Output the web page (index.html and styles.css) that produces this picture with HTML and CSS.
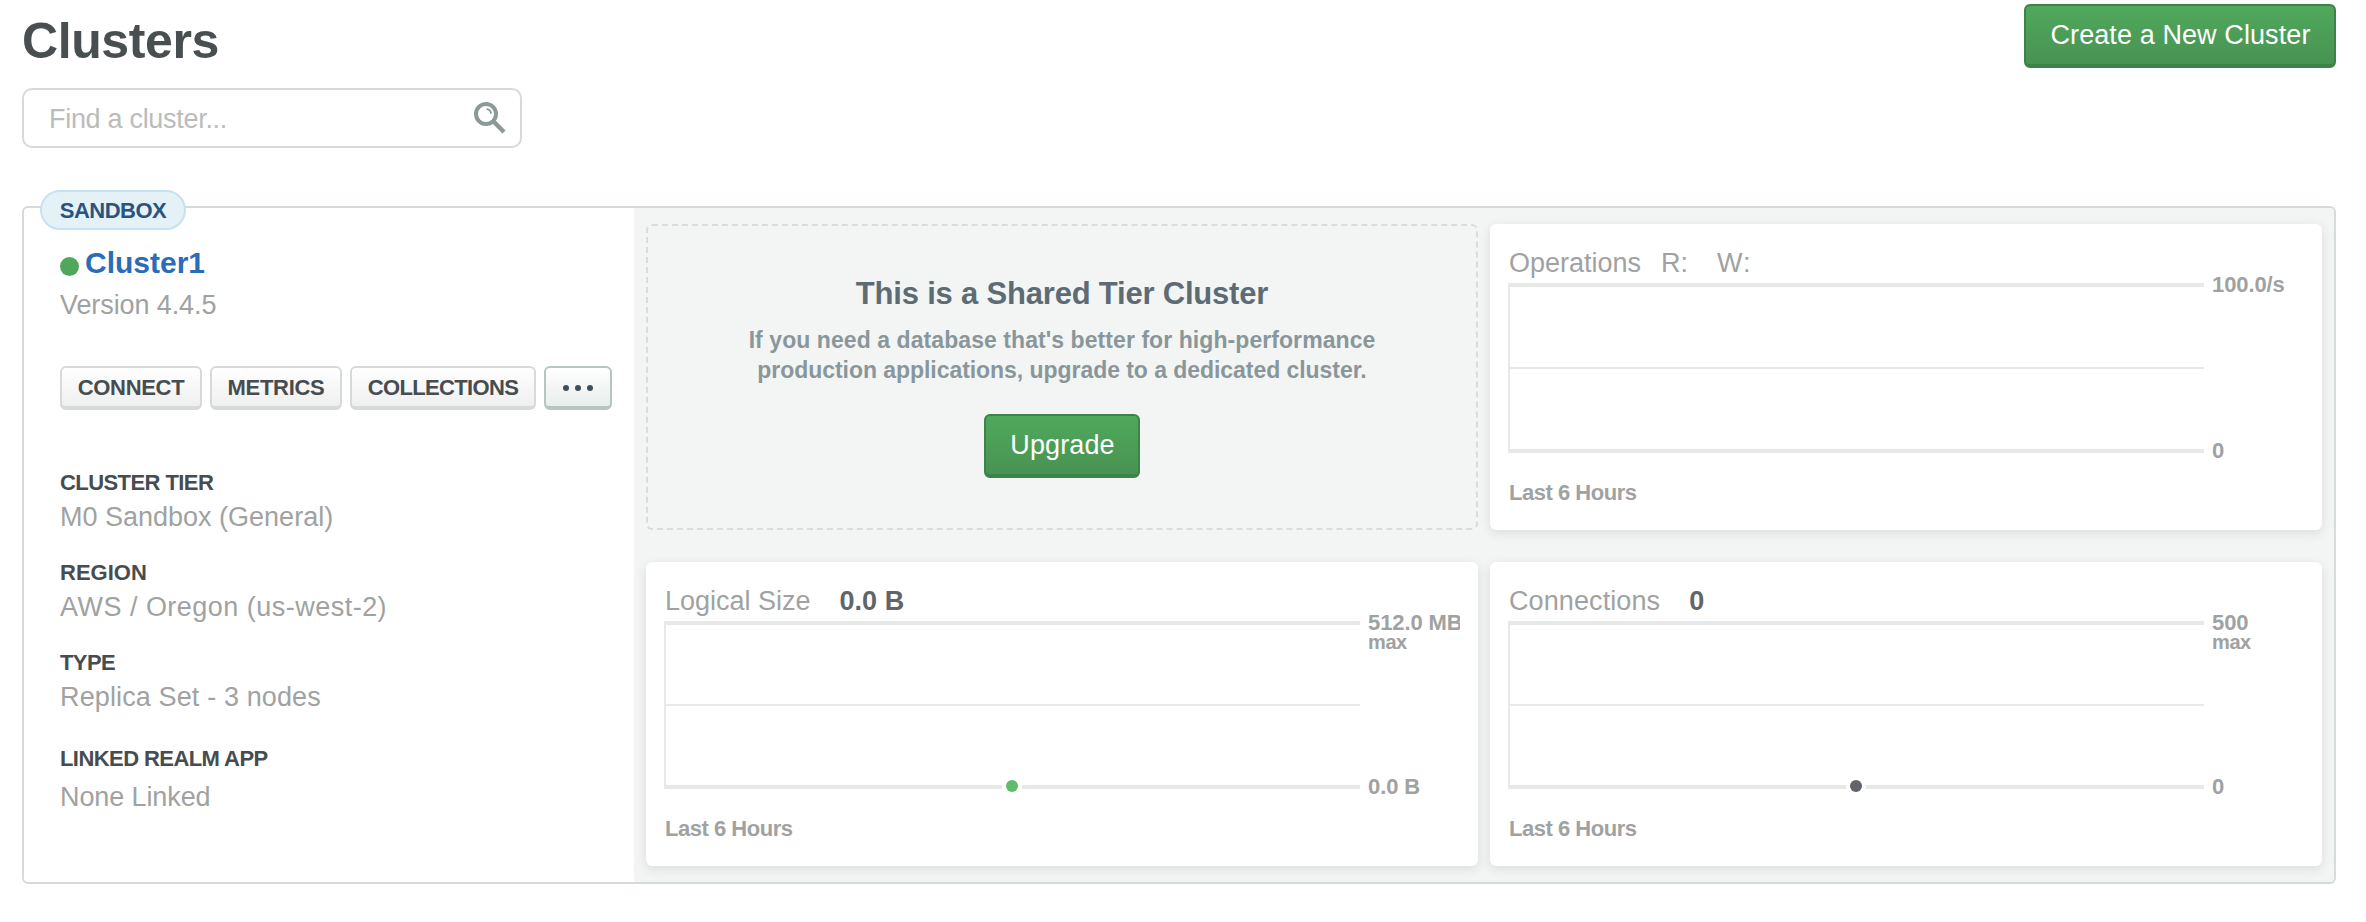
FILE: index.html
```html
<!DOCTYPE html>
<html lang="en">
<head>
<meta charset="utf-8">
<title>Clusters</title>
<link rel="stylesheet" href="styles.css">
</head>
<body>
<header class="page-header">
  <div class="page-heading">
    <h1 class="title">Clusters</h1>
    <label class="search">
      <input class="search-input" type="text" placeholder="Find a cluster...">
      <svg class="search-icon" width="34" height="34" viewBox="0 0 34 34" fill="none" stroke="#8d9899">
        <circle cx="13" cy="13" r="10" stroke-width="4"/>
        <path d="M20.5 20.5 31 31" stroke-width="4.4"/>
        <path d="M13.6 8.2a4.8 4.8 0 0 1 4.4 4.6" stroke-width="1.8"/>
      </svg>
    </label>
  </div>
  <button class="btn-primary btn-create">Create a New Cluster</button>
</header>

<main class="cluster">
  <span class="badge">SANDBOX</span>
  <section class="info">
    <div class="name-row"><span class="status"></span><a class="name">Cluster1</a></div>
    <div class="value version">Version 4.4.5</div>
    <div class="actions">
      <button class="btn btn-connect">CONNECT</button>
      <button class="btn btn-metrics">METRICS</button>
      <button class="btn btn-collections">COLLECTIONS</button>
      <button class="btn btn-more" aria-label="More">
        <svg width="32" height="8" viewBox="0 0 32 8" fill="#3d4f58"><circle cx="4" cy="4" r="3"/><circle cx="16" cy="4" r="3"/><circle cx="28" cy="4" r="3"/></svg>
      </button>
    </div>
    <dl class="facts">
      <dt class="label tight">CLUSTER TIER</dt>
      <dd class="value">M0 Sandbox (General)</dd>
      <dt class="label">REGION</dt>
      <dd class="value region">AWS / Oregon (us-west-2)</dd>
      <dt class="label tight">TYPE</dt>
      <dd class="value type">Replica Set - 3 nodes</dd>
      <dt class="label tight linked">LINKED REALM APP</dt>
      <dd class="value linked-value">None Linked</dd>
    </dl>
  </section>

  <section class="panels">
    <div class="upsell">
      <h2 class="upsell-title">This is a Shared Tier Cluster</h2>
      <p class="upsell-text">If you need a database that's better for high-performance<br><span class="second-line">production applications, upgrade to a dedicated cluster.</span></p>
      <button class="btn-primary btn-upgrade">Upgrade</button>
    </div>

    <article class="card">
      <div class="card-head"><span class="metric operations">Operations</span><span class="read">R:</span><span class="write">W:</span></div>
      <div class="chart">
        <svg class="plot" width="696" height="170" fill="#e7e9e8">
          <rect width="696" height="4"/><rect y="84" width="696" height="2"/><rect y="166" width="696" height="4"/><rect width="2" height="170"/>
        </svg>
        <div class="scale"><div>100.0/s</div><div>0</div></div>
      </div>
      <div class="period">Last 6 Hours</div>
    </article>

    <article class="card">
      <div class="card-head"><span class="metric">Logical Size</span><b class="reading">0.0 B</b></div>
      <div class="chart">
        <svg class="plot" width="696" height="168" fill="#e7e9e8">
          <rect width="696" height="4"/><rect y="83" width="696" height="2"/><rect y="164" width="696" height="4"/><rect width="2" height="168"/>
          <circle cx="348" cy="165" r="10" fill="#fff"/><circle cx="348" cy="165" r="6" fill="#5ebc6b"/>
        </svg>
        <div class="scale"><div>512.0 MB<div class="max">max</div></div><div>0.0 B</div></div>
      </div>
      <div class="period">Last 6 Hours</div>
    </article>

    <article class="card">
      <div class="card-head"><span class="metric connections">Connections</span><b class="reading">0</b></div>
      <div class="chart">
        <svg class="plot" width="696" height="168" fill="#e7e9e8">
          <rect width="696" height="4"/><rect y="83" width="696" height="2"/><rect y="164" width="696" height="4"/><rect width="2" height="168"/>
          <circle cx="348" cy="165" r="10" fill="#fff"/><circle cx="348" cy="165" r="6" fill="#616569"/>
        </svg>
        <div class="scale"><div>500<div class="max">max</div></div><div>0</div></div>
      </div>
      <div class="period">Last 6 Hours</div>
    </article>
  </section>
</main>
</body>
</html>
```
FILE: styles.css
```css
* { box-sizing: border-box; }
body {
  margin: 0;
  padding: 0 30px 0 22px;
  background: #fff;
  color: #464c4f;
  font-family: "Liberation Sans", Arial, sans-serif;
  font-size: 27px;
}
button { font-family: inherit; margin: 0; padding: 0; white-space: nowrap; }

/* Header */
.page-header { display: flex; justify-content: space-between; align-items: flex-start; height: 206px; }
.title { margin: 13px 0 0; font-size: 50px; line-height: 56px; letter-spacing: -0.4px; color: #494f50; }
.search {
  display: flex;
  align-items: center;
  width: 500px;
  height: 60px;
  margin-top: 19px;
  padding: 0 13px 0 25px;
  border: 2px solid #d5dbda;
  border-radius: 10px;
}
.search-input {
  flex: 1;
  min-width: 0;
  height: 40px;
  padding: 2px 0 0;
  border: 0;
  outline: 0;
  background: none;
  font: inherit;
  letter-spacing: -0.3px;
}
.search-input::placeholder { color: #babcbc; opacity: 1; }
.btn-primary {
  border: 2px solid #3d8248;
  border-bottom-width: 4px;
  border-radius: 6px;
  height: 64px;
  background: linear-gradient(#50a85c, #489352);
  color: #fff;
  font-size: 27px;
  letter-spacing: 0.1px;
}
.btn-create { width: 312px; margin-top: 4px; }
.btn-create, .btn-upgrade { padding: 1px 0 0 1px; }

/* Cluster card */
.cluster {
  position: relative;
  display: flex;
  height: 678px;
  border: 2px solid #d5dbda;
  border-radius: 6px;
}
.badge {
  position: absolute;
  left: 16px;
  top: -18px;
  width: 146px;
  height: 40px;
  border: 2px solid #c6e1f0;
  border-radius: 20px;
  background: #e4f1f6;
  color: #2a5380;
  font-size: 22px;
  font-weight: bold;
  line-height: 38px;
  letter-spacing: -0.5px;
  text-align: center;
}
.info { width: 610px; padding: 38px 0 0 36px; }
.name-row { display: flex; align-items: flex-start; height: 36px; gap: 6px; }
.status { width: 19px; height: 19px; margin-top: 11px; border-radius: 50%; background: #4fa75b; }
.name { margin-top: -1px; color: #2a6cb8; font-size: 30px; font-weight: bold; line-height: 36px; letter-spacing: 0; }
.value { margin: 0; color: #a0a2a2; font-size: 27px; line-height: 32px; white-space: nowrap; }
.version { margin-top: 7px; letter-spacing: -0.1px; }
.actions { display: flex; gap: 8px; margin-top: 45px; }
.btn {
  height: 44px;
  padding-top: 2px;
  border: 2px solid #d7dada;
  border-bottom-width: 4px;
  border-radius: 6px;
  background: linear-gradient(#fff, #efefef);
  color: #464c4f;
  font-size: 22px;
  font-weight: bold;
}
.btn-connect { width: 142px; letter-spacing: -0.3px; }
.btn-metrics { width: 132px; letter-spacing: -0.3px; }
.btn-collections { width: 186px; letter-spacing: -0.65px; }
.btn-more {
  display: flex;
  align-items: center;
  justify-content: center;
  width: 68px;
  border-color: #b8c4c2;
  background: linear-gradient(#fff, #e7eeec);
}
.facts { margin: 60px 0 0; }
.label { height: 26px; color: #464c4f; font-size: 22px; font-weight: bold; line-height: 26px; white-space: nowrap; }
.tight { letter-spacing: -0.57px; }
.facts .value { margin: 5px 0 27px; }
.facts .region { letter-spacing: 0.48px; }
.facts .type { margin-bottom: 33px; letter-spacing: 0.13px; }
.facts .linked-value { margin-top: 9px; letter-spacing: -0.1px; }

/* Metric panels */
.panels {
  flex: 1;
  display: grid;
  grid-template-columns: 832px 832px;
  grid-template-rows: 306px 304px;
  gap: 32px 12px;
  padding: 16px 12px;
  border-radius: 0 4px 4px 0;
  background: #f3f5f4;
}
.upsell {
  display: flex;
  flex-direction: column;
  align-items: center;
  padding-top: 50px;
  border: 2px dashed #d8dcdb;
  border-radius: 6px;
}
.upsell-title { margin: 0; color: #5d6c74; font-size: 31px; line-height: 36px; letter-spacing: -0.2px; white-space: nowrap; }
.upsell-text {
  margin: 13px 0 0;
  color: #89979b;
  font-size: 23px;
  font-weight: bold;
  line-height: 30px;
  letter-spacing: 0.07px;
  text-align: center;
  white-space: nowrap;
}
.second-line { letter-spacing: -0.05px; }
.btn-upgrade { width: 156px; margin-top: 29px; }
.card {
  padding: 23px 18px 0;
  border-radius: 6px;
  background: #fff;
  box-shadow: 0 3px 12px rgba(0, 0, 0, 0.1);
}
.card-head { display: flex; height: 32px; padding-left: 1px; color: #a0a2a2; line-height: 32px; white-space: nowrap; }
.connections { letter-spacing: 0.1px; }
.read { margin-left: 20px; }
.write { margin-left: 29px; letter-spacing: 1px; }
.reading { margin-left: 29px; color: #616569; }
.chart { display: flex; margin-top: 4px; }
.plot { display: block; flex: none; overflow: visible; }
.scale {
  flex: 1;
  min-width: 0;
  display: flex;
  flex-direction: column;
  justify-content: space-between;
  margin: -7px 0 -7px;
  padding-left: 8px;
  overflow-x: clip;
  color: #a0a2a2;
  font-size: 22px;
  font-weight: bold;
  line-height: 18px;
  letter-spacing: -0.1px;
  white-space: nowrap;
}
.max { font-size: 20px; letter-spacing: -0.4px; line-height: 20px; }
.period { margin-top: 28px; padding-left: 1px; color: #a0a2a2; font-size: 22px; font-weight: bold; line-height: 24px; letter-spacing: -0.48px; }
```
